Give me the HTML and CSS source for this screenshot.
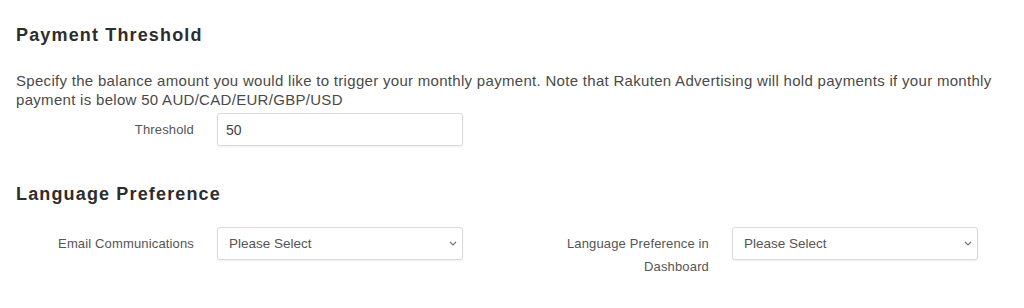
FILE: index.html
```html
<!DOCTYPE html>
<html lang="en">
<head>
<meta charset="utf-8">
<title>Payment Threshold</title>
<link rel="stylesheet" href="styles.css">
</head>
<body>
<div class="page">
  <section class="section">
    <h2 class="section-title">Payment Threshold</h2>
    <p class="section-text">Specify the balance amount you would like to trigger your monthly payment. Note that Rakuten Advertising will hold payments if your monthly payment is below 50 AUD/CAD/EUR/GBP/USD</p>
    <div class="form-row form-row-threshold">
      <div class="field">
        <label class="field-label" for="threshold">Threshold</label>
        <div class="field-control">
          <input id="threshold" class="input" type="text" value="50">
        </div>
      </div>
    </div>
  </section>
  <section class="section section-lang">
    <h2 class="section-title">Language Preference</h2>
    <div class="form-row">
      <div class="field">
        <label class="field-label" for="email-lang">Email Communications</label>
        <div class="field-control select-wrap">
          <select id="email-lang" class="input select"><option>Please Select</option></select>
          <svg class="chevron" viewBox="0 0 8 5" width="8" height="5"><path d="M1 1l3 3 3-3" fill="none" stroke="#777" stroke-width="1.2"/></svg>
        </div>
      </div>
      <div class="field">
        <label class="field-label" for="dash-lang">Language Preference in Dashboard</label>
        <div class="field-control select-wrap">
          <select id="dash-lang" class="input select"><option>Please Select</option></select>
          <svg class="chevron" viewBox="0 0 8 5" width="8" height="5"><path d="M1 1l3 3 3-3" fill="none" stroke="#777" stroke-width="1.2"/></svg>
        </div>
      </div>
    </div>
  </section>
</div>
</body>
</html>
```

FILE: styles.css
```css
* { box-sizing: border-box; }
html, body { margin: 0; padding: 0; background: #fff; }
body {
  font-family: "Liberation Sans", Arial, sans-serif;
  color: #4a4a4a;
}
.page {
  padding: 24px 16px 0 16px;
}
.section-title {
  margin: 0;
  font-family: "Liberation Sans", Arial, sans-serif;
  font-weight: 700;
  font-size: 18px;
  line-height: 22px;
  letter-spacing: 1.15px;
  color: #2d2d2d;
}
.section-text {
  margin: 25px 0 0 0;
  font-size: 15px;
  line-height: 19px;
  letter-spacing: 0.3px;
  color: #4a4a4a;
}
.form-row {
  display: flex;
}
.form-row-threshold { margin-top: 4px; }
.field {
  width: 515px;
  flex: none;
  display: flex;
  align-items: flex-start;
}
.field-label {
  width: 178px;
  flex: none;
  text-align: right;
  font-size: 13px;
  line-height: 23px;
  letter-spacing: 0.15px;
  padding-top: 5px;
  color: #555;
}
.field-control {
  margin-left: 23px;
  width: 246px;
  flex: none;
}
.input {
  display: block;
  width: 246px;
  height: 33px;
  border: 1px solid #dadada;
  border-radius: 3px;
  box-shadow: 0 1px 2px rgba(0,0,0,0.07);
  padding: 0 8px;
  font-family: "Liberation Sans", Arial, sans-serif;
  font-size: 14px;
  color: #444;
  background: #fff;
  outline: none;
}
.section-lang { margin-top: 37px; }
.section-lang .form-row { margin-top: 22px; }
.select-wrap { position: relative; }
.select {
  -webkit-appearance: none;
  appearance: none;
  padding: 0 24px 0 11px;
  font-size: 13.5px;
  color: #555;
}
.chevron {
  position: absolute;
  right: 6px;
  top: 14px;
}
```
